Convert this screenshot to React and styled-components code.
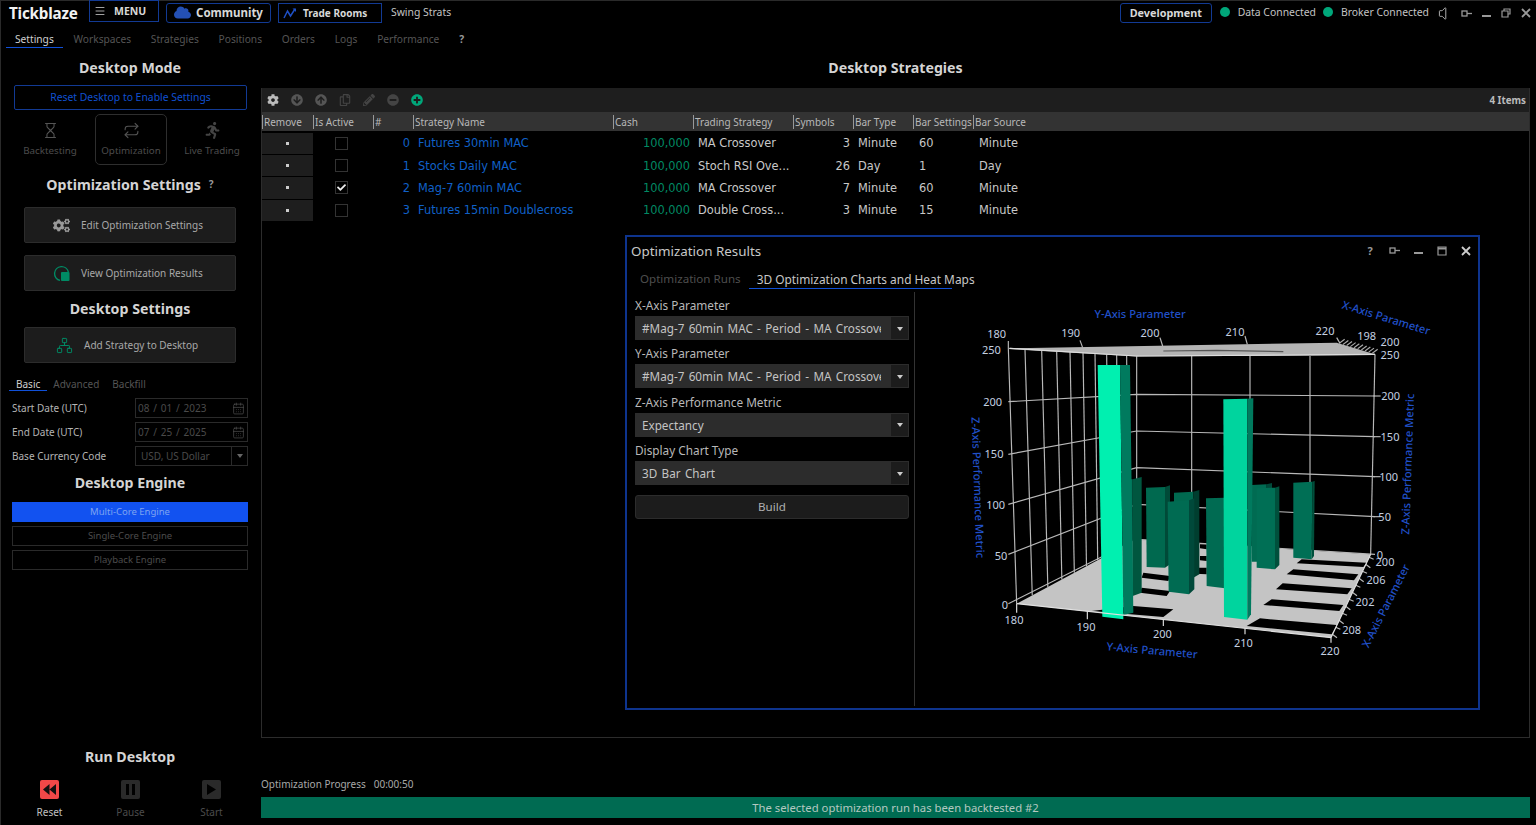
import React from "react";
import styled, { createGlobalStyle } from "styled-components";
import { Menu, Hourglass, Repeat, Network, CalendarDays, Volume } from "lucide-react";
import {
  FaCloud,
  FaCog,
  FaCogs,
  FaArrowCircleDown,
  FaArrowCircleUp,
  FaRegCopy,
  FaPencilAlt,
  FaMinusCircle,
  FaPlusCircle,
  FaRunning,
  FaCheck,
} from "react-icons/fa";

const GlobalStyle = createGlobalStyle`
  html, body { margin: 0; padding: 0; background: #000; }
  body { font-family: "Noto Sans", "Open Sans", sans-serif; color: #d0d0d0; overflow: hidden; }
  * { box-sizing: border-box; }
`;

const Page = styled.div`
  width: 1536px;
  height: 825px;
  background: #000;
  border-left: 1px solid #2a2a2a;
  border-top: 1px solid #2a2a2a;
  display: flex;
  flex-direction: column;
`;

/* ---------- top bar ---------- */
const TopBar = styled.div`
  height: 24px;
  display: flex;
  align-items: center;
  padding: 0 0 0 8px;
`;
const Brand = styled.div`
  font-size: 15.2px;
  font-weight: 700;
  color: #f2f2f2;
  width: 80px;
  letter-spacing: -0.2px;
`;
const OutlineBtn = styled.div`
  height: ${(p) => (p.$flat ? "22px" : "20px")};
  width: ${(p) => p.$w}px;
  margin-top: ${(p) => (p.$flat ? "-4px" : "-1px")};
  margin-right: ${(p) => p.$mr || 7}px;
  border: 1px solid #123a94;
  border-radius: ${(p) => p.$r || 0}px;
  display: flex;
  align-items: center;
  gap: ${(p) => p.$gap || 8}px;
  padding-left: ${(p) => p.$pl || 8}px;
  font-size: ${(p) => p.$fs || 10}px;
  font-weight: 700;
  color: #d8d8d8;
`;
const Plain = styled.div`
  font-size: 10.4px;
  color: #c4c4c4;
  margin-top: -2px;
`;
const Spacer = styled.div`
  flex: 1;
`;
const Dot = styled.span`
  width: 10px;
  height: 10px;
  border-radius: 50%;
  background: #00a77a;
  margin: -2px 8px 0 ${(p) => p.$ml}px;
`;
const WinControls = styled.div`
  display: flex;
  align-items: center;
  color: #999;
  margin-left: ${(p) => p.$ml || 0}px;
`;
const WinSlot = styled.div`
  width: ${(p) => p.$w || 20}px;
  display: flex;
  justify-content: center;
  align-items: center;
  font-size: 11px;
  font-weight: 700;
  color: ${(p) => p.$c || "inherit"};
`;

/* ---------- main tabs ---------- */
const TabsRow = styled.div`
  height: 25px;
  padding: 2px 0 0 14px;
  display: flex;
  gap: 19.8px;
  font-size: 10.2px;
`;
const TabItem = styled.div`
  position: relative;
  line-height: 25px;
  color: ${(p) => (p.$active ? "#d0d0d0" : p.$help ? "#999" : "#555")};
  font-weight: ${(p) => (p.$help ? 700 : 400)};
  &::after {
    content: "";
    display: ${(p) => (p.$active ? "block" : "none")};
    position: absolute;
    left: -${(p) => p.$inset || 9}px;
    right: -${(p) => p.$inset || 9}px;
    bottom: ${(p) => p.$under || 2}px;
    height: 1.5px;
    background: #1050d8;
  }
`;

const Main = styled.div`
  flex: 1;
  display: flex;
  min-height: 0;
`;

/* ---------- sidebar ---------- */
const Sidebar = styled.aside`
  width: 260px;
  padding: 0 13px 6px 11px;
  display: flex;
  flex-direction: column;
`;
const Heading = styled.h2`
  margin: ${(p) => p.$mt || 0}px 0 ${(p) => p.$mb || 0}px;
  font-size: 14.2px;
  line-height: 20px;
  font-weight: 700;
  text-align: center;
  color: #d4d4d4;
`;
const HelpMark = styled.span`
  font-size: 10px;
  margin-left: 8px;
  color: #999;
  vertical-align: 2px;
`;
const ResetLink = styled.div`
  height: 25px;
  margin: 0 1px 0 2px;
  border: 1px solid #123a94;
  border-radius: 2px;
  font-size: 10.4px;
  line-height: 23px;
  text-align: center;
  color: #1050d0;
`;
const ModeRow = styled.div`
  display: grid;
  grid-template-columns: 72px 72px 72px;
  justify-content: space-between;
  margin-top: 4px;
  padding-left: 2px;
`;
const ModeItem = styled.div`
  height: 51px;
  border: 1px solid ${(p) => (p.$active ? "#2e2e2e" : "transparent")};
  border-radius: 5px;
  display: flex;
  flex-direction: column;
  align-items: center;
  justify-content: flex-end;
  gap: 5px;
  padding-bottom: 7px;
  font-size: 9.8px;
  white-space: nowrap;
  color: #4c4c4c;
`;
const ActionBtn = styled.div`
  height: 36px;
  margin: ${(p) => p.$mt || 0}px 12px 0 12px;
  background: #1c1c1c;
  border: 1px solid #2c2c2c;
  border-radius: 2px;
  display: flex;
  align-items: center;
  gap: 11px;
  padding-left: ${(p) => p.$pl || 28}px;
  font-size: 10px;
  color: #a8a8a8;
`;
const SubTabs = styled.div`
  display: flex;
  gap: 13px;
  margin-top: 9px;
  padding-left: 4px;
  font-size: 10px;
  height: 26px;
`;
const FormRow = styled.div`
  height: 20px;
  margin-bottom: 4px;
  display: flex;
  align-items: center;
  justify-content: space-between;
  font-size: 10px;
  color: #b4b4b4;
`;
const SmallInput = styled.div`
  width: 113px;
  height: 20px;
  border: 1px solid #2a2a2a;
  display: flex;
  align-items: center;
  justify-content: space-between;
  padding: 0 ${(p) => (p.$select ? 0 : 2)}px 0 ${(p) => (p.$select ? 5 : 2)}px;
  color: #4a4a4a;
  font-size: 10px;
  word-spacing: ${(p) => (p.$select ? 0 : 1.2)}px;
  white-space: pre;
`;
const SmallCaret = styled.span`
  width: 16px;
  height: 18px;
  border-left: 1px solid #2a2a2a;
  display: flex;
  align-items: center;
  justify-content: center;
  &::after {
    content: "";
    border: 3px solid transparent;
    border-top: 4px solid #666;
    margin-top: 3px;
  }
`;
const EngineBtn = styled.div`
  height: 20px;
  margin-bottom: 4px;
  border: 1px solid ${(p) => (p.$on ? "#1252f0" : "#2a2a2a")};
  background: ${(p) => (p.$on ? "#1252f0" : "transparent")};
  color: ${(p) => (p.$on ? "#7fa4f0" : "#4c4c4c")};
  font-size: 9.5px;
  line-height: 18px;
  text-align: center;
`;
const RunSection = styled.div`
  margin-top: auto;
`;
const RunRow = styled.div`
  display: grid;
  grid-template-columns: repeat(3, 1fr);
  margin: 13px 0 0 -3px;
  width: 243px;
`;
const RunItem = styled.div`
  display: flex;
  flex-direction: column;
  align-items: center;
  gap: 6px;
  font-size: 10px;
  color: ${(p) => (p.$on ? "#c0c0c0" : "#4c4c4c")};
`;
const RunIcon = styled.div`
  width: 19px;
  height: 19px;
  border-radius: 2px;
  background: ${(p) => (p.$on ? "#f04848" : "#2a2a2a")};
  display: flex;
  align-items: center;
  justify-content: center;
`;

/* ---------- right side ---------- */
const Content = styled.section`
  flex: 1;
  display: flex;
  flex-direction: column;
  padding-right: 6px;
  min-width: 0;
`;
const CenterTitle = styled(Heading)`
  height: 38px;
  line-height: 36px;
`;
const Panel = styled.div`
  position: relative;
  height: 650px;
  border: 1px solid #2c2c2c;
  border-top: 0;
`;
const Toolbar = styled.div`
  height: 24px;
  background: #1e1e1e;
  display: flex;
  align-items: center;
  gap: 12px;
  padding: 0 3px 0 5px;
  color: #555;
`;
const ItemCount = styled.div`
  margin-left: auto;
  font-size: 9.8px;
  font-weight: 700;
  color: #bbb;
`;
const columns = "51px 60px 40px 200px 80px 100px 60px 60px 60px 1fr";
const HeaderRow = styled.div`
  display: grid;
  grid-template-columns: ${columns};
  height: 19px;
  margin-bottom: 1px;
  background: #333;
  font-size: 10px;
  line-height: 19px;
  color: #b8b8b8;
`;
const HeaderCell = styled.div`
  border-left: 1px solid #999;
  padding-left: 1px;
  height: 14px;
  line-height: 14px;
  margin-top: 3px;
  white-space: nowrap;
`;
const Row = styled.div`
  display: grid;
  grid-template-columns: ${columns};
  height: 22.4px;
  align-items: center;
  font-family: "DejaVu Sans", Verdana, sans-serif;
  font-size: 11.4px;
  color: #c8c8c8;
`;
const RemoveCell = styled.div`
  height: 21.4px;
  background: #1e1e1e;
  display: flex;
  align-items: center;
  justify-content: center;
  &::after {
    content: "";
    width: 3px;
    height: 3px;
    background: #ccc;
  }
`;
const CheckCell = styled.div`
  display: flex;
  justify-content: center;
  padding-right: 3px;
`;
const Check = styled.div`
  width: 13px;
  height: 13px;
  border: 1px solid #333;
  display: flex;
  align-items: center;
  justify-content: center;
  color: #eee;
`;
const Cell = styled.div`
  text-align: ${(p) => (p.$right ? "right" : "left")};
  padding: 0 ${(p) => (p.$right ? 3 : 0)}px 0 ${(p) => (p.$right ? 0 : p.$pl || 5)}px;
  color: ${(p) => p.$color || "inherit"};
  white-space: nowrap;
`;
const ProgressLabel = styled.div`
  margin-top: 39px;
  display: flex;
  gap: 8px;
  font-size: 10px;
  line-height: 14px;
  color: #a8a8a8;
`;
const ProgressBar = styled.div`
  height: 21px;
  margin-top: 6px;
  background: #006b52;
  font-size: 11.3px;
  line-height: 21px;
  text-align: center;
  color: #b4c8c0;
`;

/* ---------- floating results window ---------- */
const ResultWindow = styled.div`
  position: absolute;
  left: 363px;
  top: 147px;
  width: 855px;
  height: 475px;
  border: 2px solid #0e348e;
  background: #000;
  display: flex;
  flex-direction: column;
`;
const WindowHead = styled.div`
  height: 29px;
  display: flex;
  align-items: center;
  justify-content: space-between;
  padding: 0 0 2px 4px;
  font-size: 13.4px;
  color: #c8c8c8;
`;
const WindowTabs = styled.div`
  display: flex;
  gap: 16px;
  height: 26px;
  padding-left: 13px;
`;
const WindowTab = styled.div`
  position: relative;
  line-height: 26px;
  font-size: ${(p) => (p.$active ? 11.9 : 11.6)}px;
  color: ${(p) => (p.$active ? "#c8c8c8" : "#4e4e4e")};
  &::after {
    content: "";
    display: ${(p) => (p.$active ? "block" : "none")};
    position: absolute;
    left: -8px;
    right: 23px;
    bottom: 3px;
    height: 1.5px;
    background: #1050d8;
  }
`;
const WindowBody = styled.div`
  flex: 1;
  display: flex;
  min-height: 0;
`;
const ParamColumn = styled.div`
  width: 288px;
  margin-bottom: 2px;
  padding: 2px 5px 0 8px;
  border-right: 1px solid #333;
`;
const ParamLabel = styled.div`
  height: 22px;
  line-height: 22px;
  font-size: 11.8px;
  color: #b8b8b8;
`;
const Dropdown = styled.div`
  height: 24px;
  margin-bottom: 2.4px;
  background: #2c2c2c;
  display: flex;
  align-items: center;
  font-size: 11.7px;
  word-spacing: 1.3px;
  color: #c4c4c4;
`;
const DropText = styled.div`
  flex: 1;
  padding-left: 7px;
  overflow: hidden;
  white-space: nowrap;
  margin-right: 9px;
`;
const DropArrow = styled.div`
  width: 19px;
  height: 24px;
  background: #1c1c1c;
  border: 1px solid #2c2c2c;
  display: flex;
  align-items: center;
  justify-content: center;
  &::after {
    content: "";
    border: 3.5px solid transparent;
    border-top: 4px solid #ccc;
    margin-top: 4px;
  }
`;
const BuildBtn = styled.div`
  height: 24px;
  margin-top: 10px;
  background: #1c1c1c;
  border: 1px solid #2c2c2c;
  border-radius: 3px;
  font-size: 11.6px;
  line-height: 22px;
  text-align: center;
  color: #b0b0b0;
`;
const ChartArea = styled.div`
  flex: 1;
  padding-left: 35px;
`;
const ChartSvg = styled.svg`
  display: block;
  width: 490px;
  height: 380px;
  margin-top: -1px;
`;
const Num = styled.text`
  font-family: "Noto Sans", sans-serif;
  font-size: 33px;
  fill: #c4d0e0;
  text-anchor: middle;
`;
const AxisName = styled.text`
  font-family: "Noto Sans", sans-serif;
  font-size: 33.5px;
  font-weight: 500;
  fill: #2050c8;
  text-anchor: middle;
`;
const GridLine = styled.polyline`
  fill: none;
  stroke: ${(p) => p.$c || "#b8b8b8"};
  stroke-width: ${(p) => p.$w || 3.5};
`;

/* ---------- data ---------- */
const rows = [
  { id: 0, name: "Futures 30min MAC", strat: "MA Crossover", sym: 3, type: "Minute", set: 60, src: "Minute" },
  { id: 1, name: "Stocks Daily MAC", strat: "Stoch RSI Ove...", sym: 26, type: "Day", set: 1, src: "Day" },
  { id: 2, name: "Mag-7 60min MAC", strat: "MA Crossover", sym: 7, type: "Minute", set: 60, src: "Minute", on: true },
  { id: 3, name: "Futures 15min Doublecross", strat: "Double Cross...", sym: 3, type: "Minute", set: 15, src: "Minute" },
];
const headers = ["Remove", "Is Active", "#", "Strategy Name", "Cash", "Trading Strategy", "Symbols", "Bar Type", "Bar Settings", "Bar Source"];

function PinIcon() {
  return (
    <svg width="11" height="9" viewBox="0 0 11 9">
      <rect x="1" y="2" width="5" height="5" fill="none" stroke="currentColor" strokeWidth="1.3" />
      <path d="M6 4.5h5" stroke="currentColor" strokeWidth="1.3" />
    </svg>
  );
}
function MinIcon() {
  return (
    <svg width="9" height="9" viewBox="0 0 9 9">
      <rect x="0" y="6" width="9" height="2" fill="currentColor" />
    </svg>
  );
}
function RestoreIcon() {
  return (
    <svg width="10" height="10" viewBox="0 0 10 10">
      <path d="M3 3V1h6v5H7M1 3h6v6H1z" fill="none" stroke="currentColor" strokeWidth="1.2" />
    </svg>
  );
}
function MaxIcon() {
  return (
    <svg width="10" height="10" viewBox="0 0 10 10">
      <path d="M1 1h8v8H1z" fill="none" stroke="currentColor" strokeWidth="1.2" />
      <path d="M1 2.5h8" stroke="currentColor" strokeWidth="2" />
    </svg>
  );
}
function CloseIcon() {
  return (
    <svg width="10" height="10" viewBox="0 0 10 10">
      <path d="M1 1l8 8M9 1l-8 8" stroke="currentColor" strokeWidth="1.8" />
    </svg>
  );
}
function TradeIcon() {
  return (
    <svg width="14" height="12" viewBox="0 0 14 12">
      <path d="M1 11l3.5-7 3 5L12 2" fill="none" stroke="#1e4fc4" strokeWidth="1.5" />
      <path d="M9.5 1.5h3.5v3.5z" fill="#1e4fc4" />
    </svg>
  );
}
function ResultsIcon() {
  return (
    <svg width="17" height="17" viewBox="0 0 17 17">
      <path d="M15.4 7A7 7 0 1 0 7 15.4" fill="none" stroke="#008a64" strokeWidth="1.4" />
      <path d="M9 7h6.5a1 1 0 0 1 1 1v7a1 1 0 0 1-1 1H9a1 1 0 0 1-1-1V8a1 1 0 0 1 1-1z" fill="#008a64" />
    </svg>
  );
}

function Chart() {
  // coordinates are 3x page pixels, so they read straight off the reference
  const wallTops = [175, 225, 275, 320, 360, 399, 435, 470, 500, 530, 560];
  const levels = [
    [172, 195, 190],
    [332, 310, 315],
    [490, 420, 437],
    [640, 530, 557],
    [790, 640, 677],
    [938, 745, 790],
  ];
  const stripes = [
    "1055,805 1250,815 1240,828 1040,817",
    "1030,835 1225,850 1212,868 1010,850",
    "998,877 1205,892 1192,910 978,895",
    "965,925 1180,942 1168,960 940,942",
    "930,982 1160,1002 1145,1030 890,1005",
    "580,845 660,855 655,870 575,860",
    "575,890 660,900 650,915 570,905",
    "550,945 670,955 640,978 425,960",
    "750,760 770,760 770,775 750,772",
    "750,795 770,795 770,810 750,808",
    "735,830 770,830 770,850 735,848",
  ];
  const back = [
    { f: "520,565 548,565 548,915 520,918", s: "548,565 575,558 575,905 548,915", c: "#006f56", d: "#00563f" },
    { f: "588,590 645,588 645,830 590,828", s: "645,588 660,583 660,820 645,830", c: "#00694f", d: "#004a38" },
    { f: "672,605 730,602 730,860 672,860", s: "730,602 748,597 748,850 730,860", c: "#00694f", d: "#003e2f" },
    { f: "653,632 717,628 717,910 656,902", s: "717,628 733,622 733,895 717,910", c: "#006b52", d: "#00493a" },
    { f: "768,622 825,620 825,892 770,885", s: "825,620 830,618 830,885 825,892", c: "#006b52", d: "#00493a" },
    { f: "905,582 950,580 950,812 905,812", s: "950,580 966,576 966,800 950,812", c: "#006b52", d: "#00493a" },
    { f: "920,592 975,590 975,835 920,830", s: "975,590 988,586 988,822 975,835", c: "#006f55", d: "#00503c" },
    { f: "1030,575 1087,572 1085,805 1030,800", s: "1087,572 1094,570 1092,795 1085,805", c: "#006f55", d: "#00503c" },
  ];
  return (
    <ChartSvg viewBox="0 0 1470 1140">
      <polygon points="200,938 560,745 1262,790 1143,1040" fill="#c4c4c4" />
      {stripes.map((p) => (
        <polygon key={p} points={p} fill="#000" />
      ))}
      {wallTops.map((x) => {
        const f = (x - 175) / 385;
        return <GridLine key={x} points={`${x},${172 + f * 20} ${200 + f * 360},${938 - f * 193}`} />;
      })}
      {[725, 900, 1080].map((x) => (
        <GridLine key={x} points={`${x},195 ${x},${745 + ((x - 560) / 702) * 45}`} />
      ))}
      <GridLine points="1275,190 1262,790" />
      {levels.map(([a, b, c], i) => (
        <GridLine key={i} points={`175,${a} 560,${b} 1275,${c}`} />
      ))}
      {[315, 437, 557, 677].map((y) => (
        <GridLine key={y} points={`1270,${y} 1292,${y}`} />
      ))}
      <polygon points="175,172 1160,155 1275,190 560,195" fill="#b4b4b4" />
      <GridLine points="640,180 800,178 1000,182" $c="#555" />
      <GridLine points="180,172 560,195 1275,190" $c="#ddd" />
      {Array.from({ length: 10 }).map((_, i) => {
        const x = 1168 + i * 11;
        const y = 157 + i * 3.3;
        return <GridLine key={i} points={`${x},${y} ${x + 16},${y - 12}`} $c="#aaa" />;
      })}
      {Array.from({ length: 12 }).map((_, i) => {
        const x = 1147 + i * 10;
        const y = 1030 - i * 21;
        return <GridLine key={i} points={`${x},${y} ${x + 14},${y + (i % 2 ? 6 : 10)}`} $c="#bbb" />;
      })}
      <GridLine points="175,150 175,172" />
      <GridLine points="390,148 398,170" />
      <GridLine points="630,140 638,165" />
      <GridLine points="885,135 892,160" />
      <GridLine points="1160,140 1170,157" />

      {back.map((b) => (
        <g key={b.f}>
          <polygon points={b.f} fill={b.c} />
          <polygon points={b.s} fill={b.d} />
        </g>
      ))}
      <polygon points="443,222 510,222 520,985 457,977" fill="#00f0b0" />
      <polygon points="510,222 540,222 550,965 520,972" fill="#007a5e" />
      <polygon points="820,325 892,323 892,986 822,978" fill="#00d49e" />
      <polygon points="892,323 910,322 903,970 892,986" fill="#007a5e" />

      <GridLine points="200,938 1143,1040 1262,790" $c="#e0e0e0" />
      <GridLine points="412,960 412,985" $c="#e0e0e0" />
      <GridLine points="640,985 640,1005" $c="#e0e0e0" />
      <GridLine points="885,1012 885,1030" $c="#e0e0e0" />
      <GridLine points="200,938 200,965" $c="#e0e0e0" />
      <GridLine points="1143,1040 1143,1055" $c="#e0e0e0" />

      <Num x="140" y="142">180</Num>
      <Num x="362" y="138">190</Num>
      <Num x="600" y="137">200</Num>
      <Num x="855" y="134">210</Num>
      <Num x="1125" y="131">220</Num>
      <Num x="1250" y="148">198</Num>
      <Num x="1320" y="165">200</Num>
      <Num x="1320" y="204">250</Num>
      <Num x="124" y="190">250</Num>
      <Num x="128" y="346">200</Num>
      <Num x="132" y="502">150</Num>
      <Num x="137" y="655">100</Num>
      <Num x="153" y="807">50</Num>
      <Num x="165" y="955">0</Num>
      <Num x="1322" y="327">200</Num>
      <Num x="1320" y="449">150</Num>
      <Num x="1316" y="569">100</Num>
      <Num x="1304" y="689">50</Num>
      <Num x="1290" y="803">0</Num>
      <Num x="1305" y="824">200</Num>
      <Num x="1278" y="878">206</Num>
      <Num x="1245" y="945">202</Num>
      <Num x="1205" y="1030">208</Num>
      <Num x="192" y="1000">180</Num>
      <Num x="408" y="1020">190</Num>
      <Num x="637" y="1042">200</Num>
      <Num x="880" y="1068">210</Num>
      <Num x="1140" y="1092">220</Num>

      <AxisName x="570" y="82">Y-Axis Parameter</AxisName>
      <AxisName transform="translate(1305 92) rotate(17)">X-Axis Parameter</AxisName>
      <AxisName transform="translate(72 590) rotate(88)">Z-Axis Performance Metric</AxisName>
      <AxisName transform="translate(1385 520) rotate(-88)">Z-Axis Performance Metric</AxisName>
      <AxisName transform="translate(605 1090) rotate(5)">Y-Axis Parameter</AxisName>
      <AxisName transform="translate(1318 950) rotate(-63)">X-Axis Parameter</AxisName>
    </ChartSvg>
  );
}

export default function App() {
  return (
    <>
      <GlobalStyle />
      <Page>
        <TopBar>
          <Brand>Tickblaze</Brand>
          <OutlineBtn $flat $w={70} $gap={8} $pl={4} $fs={10.5}>
            <Menu size={12} strokeWidth={1.6} color="#ccc" /> MENU
          </OutlineBtn>
          <OutlineBtn $w={105} $r={3} $gap={5} $pl={7} $fs={11.5}>
            <FaCloud size={17} color="#2450b4" /> Community
          </OutlineBtn>
          <OutlineBtn $w={104} $gap={6} $pl={4} $mr={9}>
            <TradeIcon /> Trade Rooms
          </OutlineBtn>
          <Plain>Swing Strats</Plain>
          <Spacer />
          <OutlineBtn $w={92} $r={3} $pl={9} $mr={8} $fs={10.8}>
            Development
          </OutlineBtn>
          <Dot $ml={0} />
          <Plain>Data Connected</Plain>
          <Dot $ml={7} />
          <Plain>Broker Connected</Plain>
          <WinControls $ml={7}>
            <WinSlot $c="#bbb"><Volume size={17} strokeWidth={1.3} /></WinSlot>
            <WinSlot><PinIcon /></WinSlot>
            <WinSlot><MinIcon /></WinSlot>
            <WinSlot><RestoreIcon /></WinSlot>
            <WinSlot><CloseIcon /></WinSlot>
          </WinControls>
        </TopBar>

        <TabsRow>
          <TabItem $active>Settings</TabItem>
          <TabItem>Workspaces</TabItem>
          <TabItem>Strategies</TabItem>
          <TabItem>Positions</TabItem>
          <TabItem>Orders</TabItem>
          <TabItem>Logs</TabItem>
          <TabItem>Performance</TabItem>
          <TabItem $help>?</TabItem>
        </TabsRow>

        <Main>
          <Sidebar>
            <Heading $mt={8} $mb={7}>Desktop Mode</Heading>
            <ResetLink>Reset Desktop to Enable Settings</ResetLink>
            <ModeRow>
              <ModeItem>
                <Hourglass size={17} strokeWidth={1.5} color="#555" />
                Backtesting
              </ModeItem>
              <ModeItem $active>
                <Repeat size={17} strokeWidth={1.5} color="#555" />
                Optimization
              </ModeItem>
              <ModeItem>
                <FaRunning size={17} color="#444" />
                Live Trading
              </ModeItem>
            </ModeRow>
            <Heading $mt={9} $mb={12}>
              Optimization Settings<HelpMark>?</HelpMark>
            </Heading>
            <ActionBtn>
              <FaCogs size={17} color="#999" />
              Edit Optimization Settings
            </ActionBtn>
            <ActionBtn $mt={12} $pl={28}>
              <ResultsIcon />
              View Optimization Results
            </ActionBtn>
            <Heading $mt={8} $mb={8}>Desktop Settings</Heading>
            <ActionBtn $pl={31}>
              <Network size={17} strokeWidth={1.4} color="#008a64" />
              Add Strategy to Desktop
            </ActionBtn>
            <SubTabs>
              <TabItem $active $inset={7} $under={7}>Basic</TabItem>
              <TabItem>Advanced</TabItem>
              <TabItem>Backfill</TabItem>
            </SubTabs>
            <FormRow>
              Start Date (UTC)
              <SmallInput>
                {"08 / 01 / 2023"}
                <CalendarDays size={13} strokeWidth={1.2} color="#555" />
              </SmallInput>
            </FormRow>
            <FormRow>
              End Date (UTC)
              <SmallInput>
                {"07 / 25 / 2025"}
                <CalendarDays size={13} strokeWidth={1.2} color="#555" />
              </SmallInput>
            </FormRow>
            <FormRow>
              Base Currency Code
              <SmallInput $select>
                USD, US Dollar
                <SmallCaret />
              </SmallInput>
            </FormRow>
            <Heading $mt={3} $mb={9}>Desktop Engine</Heading>
            <EngineBtn $on>Multi-Core Engine</EngineBtn>
            <EngineBtn>Single-Core Engine</EngineBtn>
            <EngineBtn>Playback Engine</EngineBtn>

            <RunSection>
              <Heading>Run Desktop</Heading>
              <RunRow>
                <RunItem $on>
                  <RunIcon $on>
                    <svg width="13" height="11" viewBox="0 0 13 11">
                      <path d="M6.5 0v11L0 5.5zM13 0v11L6.5 5.5z" fill="#111" />
                    </svg>
                  </RunIcon>
                  Reset
                </RunItem>
                <RunItem>
                  <RunIcon>
                    <svg width="9" height="11" viewBox="0 0 9 11">
                      <path d="M0 0h3v11H0zM6 0h3v11H6z" fill="#000" />
                    </svg>
                  </RunIcon>
                  Pause
                </RunItem>
                <RunItem>
                  <RunIcon>
                    <svg width="9" height="11" viewBox="0 0 9 11">
                      <path d="M0 0l9 5.5L0 11z" fill="#000" />
                    </svg>
                  </RunIcon>
                  Start
                </RunItem>
              </RunRow>
            </RunSection>
          </Sidebar>

          <Content>
            <CenterTitle>Desktop Strategies</CenterTitle>
            <Panel>
              <Toolbar>
                <FaCog size={12} color="#bbb" />
                <FaArrowCircleDown size={12} />
                <FaArrowCircleUp size={12} />
                <FaRegCopy size={12} color="#444" />
                <FaPencilAlt size={12} color="#444" />
                <FaMinusCircle size={12} color="#444" />
                <FaPlusCircle size={12} color="#00a77a" />
                <ItemCount>4 Items</ItemCount>
              </Toolbar>
              <HeaderRow>
                {headers.map((h) => (
                  <HeaderCell key={h}>{h}</HeaderCell>
                ))}
              </HeaderRow>
              {rows.map((r) => (
                <Row key={r.id}>
                  <RemoveCell />
                  <CheckCell>
                    <Check>{r.on ? <FaCheck size={9} /> : null}</Check>
                  </CheckCell>
                  <Cell $right $color="#1060c8">{r.id}</Cell>
                  <Cell $color="#1060c8">{r.name}</Cell>
                  <Cell $right $color="#008a64">100,000</Cell>
                  <Cell>{r.strat}</Cell>
                  <Cell $right>{r.sym}</Cell>
                  <Cell>{r.type}</Cell>
                  <Cell $pl={6}>{r.set}</Cell>
                  <Cell $pl={6}>{r.src}</Cell>
                </Row>
              ))}

              <ResultWindow>
                <WindowHead>
                  Optimization Results
                  <WinControls>
                    <WinSlot $w={24}>?</WinSlot>
                    <WinSlot $w={24}><PinIcon /></WinSlot>
                    <WinSlot $w={24}><MinIcon /></WinSlot>
                    <WinSlot $w={24}><MaxIcon /></WinSlot>
                    <WinSlot $w={24} $c="#ccc"><CloseIcon /></WinSlot>
                  </WinControls>
                </WindowHead>
                <WindowTabs>
                  <WindowTab>Optimization Runs</WindowTab>
                  <WindowTab $active>3D Optimization Charts and Heat Maps</WindowTab>
                </WindowTabs>
                <WindowBody>
                  <ParamColumn>
                    <ParamLabel>X-Axis Parameter</ParamLabel>
                    <Dropdown>
                      <DropText>#Mag-7 60min MAC - Period - MA Crossover</DropText>
                      <DropArrow />
                    </Dropdown>
                    <ParamLabel>Y-Axis Parameter</ParamLabel>
                    <Dropdown>
                      <DropText>#Mag-7 60min MAC - Period - MA Crossover</DropText>
                      <DropArrow />
                    </Dropdown>
                    <ParamLabel>Z-Axis Performance Metric</ParamLabel>
                    <Dropdown>
                      <DropText>Expectancy</DropText>
                      <DropArrow />
                    </Dropdown>
                    <ParamLabel>Display Chart Type</ParamLabel>
                    <Dropdown>
                      <DropText>3D Bar Chart</DropText>
                      <DropArrow />
                    </Dropdown>
                    <BuildBtn>Build</BuildBtn>
                  </ParamColumn>
                  <ChartArea>
                    <Chart />
                  </ChartArea>
                </WindowBody>
              </ResultWindow>
            </Panel>
            <ProgressLabel>
              <span>Optimization Progress</span>
              <span>00:00:50</span>
            </ProgressLabel>
            <ProgressBar>The selected optimization run has been backtested #2</ProgressBar>
          </Content>
        </Main>
      </Page>
    </>
  );
}
